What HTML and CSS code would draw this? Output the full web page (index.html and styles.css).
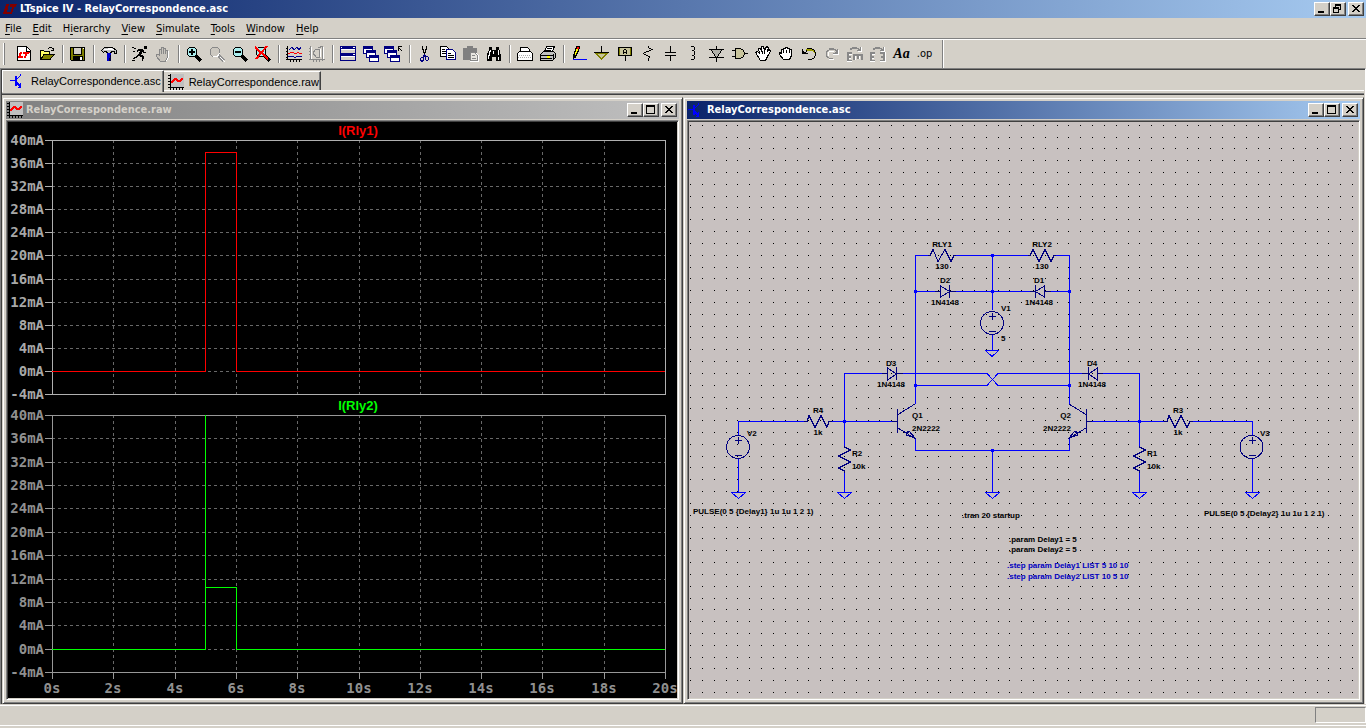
FILE: index.html
```
<!DOCTYPE html>
<html lang="en">
<head>
<meta charset="utf-8">
<title>LTspice IV - RelayCorrespondence.asc</title>
<link rel="stylesheet" href="styles.css">
</head>
<body>
<svg class="defs" width="0" height="0" aria-hidden="true">
  <symbol id="min" viewBox="0 0 12 10"><path d="M2 7h6v2H2z"/></symbol>
  <symbol id="max" viewBox="0 0 12 10"><path fill-rule="evenodd" d="M1 0h9v9H1zM2 2v6h7V2z"/></symbol>
  <symbol id="restore" viewBox="0 0 12 10"><path fill-rule="evenodd" d="M3 0h6v6H7V5h1V2H4v1H3zM1 3h6v6H1zM2 5v3h4V5z"/></symbol>
  <symbol id="close" viewBox="0 0 12 10"><path d="M2 1h2v1h1v1h2V2h1V1h2v1H9v1H8v1H7v1h1v1h1v1h1v1H8V7H7V6H5v1H4v1H2V7h1V6h1V5h1V4H4V3H3V2H2z"/></symbol>
  <symbol id="wave" viewBox="0 0 16 16"><path fill="#c0c0c0" d="M2 0h14v13H2z"/><path d="M2 0h1v13h13v1h-1v2h-1v-2h-2v2h-1v-2H9v2H8v-2H6v2H5v-2H3v2H2v-2H0v-1h2v-2H0v-1h2V8H0V7h2V5H0V4h2V2H0V1h2z"/><path fill="#f00" d="M3 7h1V6h1V5h1V4h3v1h1v1h2V5h1V4h2v2h-1v1h-1v1H9V7H8V6H7v1H6v1H5v1H3z"/></symbol>
  <symbol id="npn" viewBox="0 0 16 16"><path fill="#00f" d="M0 7h5V3h2v2h1V4h1V3h1V1h1v2h-1v1H9v1H8v1H7v3h1v1h1v1h1v-1h1v5H8v-1h1v-1H8v-1H7v1H5V8H0z"/></symbol>
  <symbol id="lens" viewBox="0 0 16 16"><path d="M9 9l6 6" stroke="currentColor" stroke-width="3"/><circle cx="6" cy="6" r="5" fill="#aee" stroke="currentColor"/></symbol>
  <symbol id="cascade" viewBox="0 0 16 16"><g fill="#fff" stroke="#000080"><path d="M.5.500h9v7h-9z"/><path d="M3.500 4.500h9v7h-9z"/><path d="M6.500 9.500h9v6h-9z"/></g><path fill="#000080" d="M0 0h10v3H0zM3 4h10v3H3zM6 9h10v3H6z"/></symbol>
</svg>

<header class="titlebar">
  <svg class="logo" viewBox="0 0 16 16" aria-hidden="true"><path d="M4 3h3L5 11h4l-1 2H1zM8 3h7l-1 3h-2l-2 7H8l2-7H8z" fill="#800000"/></svg>
  <h1>LTspice IV - RelayCorrespondence.asc</h1>
  <div class="caption-buttons">
    <button type="button" aria-label="Minimize"><svg><use href="#min"/></svg></button>
    <button type="button" aria-label="Restore"><svg><use href="#restore"/></svg></button>
    <button type="button" class="close" aria-label="Close"><svg><use href="#close"/></svg></button>
  </div>
</header>

<nav class="menu" aria-label="Menu">
  <button type="button"><u>F</u>ile</button>
  <button type="button"><u>E</u>dit</button>
  <button type="button">H<u>i</u>erarchy</button>
  <button type="button"><u>V</u>iew</button>
  <button type="button"><u>S</u>imulate</button>
  <button type="button"><u>T</u>ools</button>
  <button type="button"><u>W</u>indow</button>
  <button type="button"><u>H</u>elp</button>
</nav>

<div class="toolbar" role="toolbar" aria-label="Tools">
  <span class="grip"></span>
  <button type="button" aria-label="New schematic"><svg viewBox="0 0 16 16"><path d="M1.500.500h9l4 4v10h-13z" fill="#fff" stroke="#000"/><path d="M10.500 1v4H14" fill="none" stroke="#000"/><path d="M4 6h2l-1 4h2v2H2zM7 6h7l-1 2h-2l-1 4H8l1-4H7z" fill="#f00"/></svg></button>
  <button type="button" aria-label="Open"><svg viewBox="0 0 16 16"><path d="M9 2.500h1M10 1.500h3M13 2.500h1M14.500 2v3M12 4.500h3" stroke="#000"/><path d="M1.500 13.500v-9h3l1 1h5v3h4l-4 5z" fill="#ff6" stroke="#000"/><path d="M2 13l3-4.500h10l-4 5H2z" fill="#808000" stroke="#000"/></svg></button>
  <span class="sep"></span>
  <button type="button" aria-label="Save"><svg viewBox="0 0 16 16"><path d="M0 1h15v14H1l-1-1z" fill="#000"/><path d="M1 2h2v7h9V2h2v12H1z" fill="#808000"/><path d="M4 2h7v6H4zM10 11h2v3h-2z" fill="#d4d0c8"/><path d="M3 10h10v5H3z"/><path d="M10 11h2v3h-2zM13 2h1v1h-1z" fill="#fff"/></svg></button>
  <span class="sep"></span>
  <button type="button" aria-label="Control panel"><svg viewBox="0 0 16 16"><path d="M.5 4.500l3-3h8l4 3v3h-2v-2h-3l-1 2h-3l-1-2h-2l-1 1z" fill="#c0c0c0" stroke="#000"/><path d="M3 3h4V2h4v1h2v1H3z" fill="#fff"/><path d="M6 7h4v2H9v6H6z" fill="#0000d0"/><path d="M9 9h1v6H8z" fill="#000040"/></svg></button>
  <span class="sep"></span>
  <button type="button" aria-label="Run"><svg viewBox="0 0 16 16"><path d="M12 0h3v3h-3zM6 3h5v1h1v2h2v1h-3V6h-1v2H9v1h2v1h1v3h-1v2h-1v-4H8v-1H6v1H5v1H3v1H1v-1h1v-1h2v-1h1V9h1V8h1V6h1V5H6v1H5V4h1z"/><path d="M0 1.500h2M2 2.500h2M1 5.500h2M0 14.500h3" stroke="#000"/></svg></button>
  <button type="button" aria-label="Halt" disabled><svg viewBox="0 0 16 16"><path d="M4.500 9V3.500h2V8 1.500h2V8 2.500h2V8 4.500h2V11l-2 4.500h-5l-4-5v-2h1z" fill="#c8c4bc" stroke="#888"/><path d="M13.500 5v6l-2 4" fill="none" stroke="#fff"/></svg></button>
  <span class="sep"></span>
  <button type="button" aria-label="Zoom in"><svg viewBox="0 0 16 16"><use href="#lens"/><path d="M3 6h6M6 3v6" stroke="#000" stroke-width="2"/></svg></button>
  <button type="button" aria-label="Zoom area" disabled><svg viewBox="0 0 16 16"><path d="M9 9l6 6" stroke="#909090" stroke-width="3"/><circle cx="6" cy="6" r="5" fill="#ccc8c0" stroke="#888"/><path d="M11 11l5 5M4 10l4 1 3-4" fill="none" stroke="#fff"/></svg></button>
  <button type="button" aria-label="Zoom out"><svg viewBox="0 0 16 16"><use href="#lens"/><path d="M3 6h6" stroke="#000" stroke-width="2"/></svg></button>
  <button type="button" aria-label="Zoom full extents"><svg viewBox="0 0 16 16"><use href="#lens"/><path d="M0 1l13 12M12 0L1 13" stroke="#f00" stroke-width="2"/></svg></button>
  <span class="sep"></span>
  <button type="button" aria-label="Autorange"><svg viewBox="0 0 16 16"><path d="M1.500 0v14M0 13.500h16M0 2.500h2M0 5.500h2M0 8.500h2M0 11.500h2M4.500 14v2M7.500 14v2M10.500 14v2M13.500 14v2" stroke="#000"/><path d="M3 4l3-3 2 3 3-3 2 3 2-3M2 10h4l2 1h2l2-1h4" fill="none" stroke="#000090"/><path d="M2 7.500h2M4 6.500h4M8 7.500h3M11 6.500h2M13 7.500h3" stroke="#f00"/></svg></button>
  <button type="button" aria-label="Plot settings" disabled><svg viewBox="0 0 16 16"><path d="M1.500 0v14M0 13.500h16M0 2.500h2M0 5.500h2M0 8.500h2M4.500 14v2M7.500 14v2M10.500 14v2M13.500 0v15M9 2l5-2M4 7l3-4h3v8H7L4 7" fill="none" stroke="#888"/><path d="M2.500 1v12M14.500 1v12M11 3v8" stroke="#fff"/></svg></button>
  <span class="sep"></span>
  <button type="button" aria-label="Tile windows"><svg viewBox="0 0 16 16"><path d="M0 0h16v15H0z" fill="#000080"/><path d="M1 4h14v3H1zM1 11h14v3H1z" fill="#d4d0c8"/><path d="M1 3.500h14M1 10.500h14M1 1.500h1M13 1.500h2M13 8.500h2" stroke="#fff"/></svg></button>
  <button type="button" aria-label="Cascade windows"><svg viewBox="0 0 16 16"><use href="#cascade"/></svg></button>
  <button type="button" aria-label="Close windows"><svg viewBox="0 0 16 16"><use href="#cascade" x="-2"/><path d="M11 0h5v1h-3v1h1v1h1v1h1v1h-1V4h-1V3h-1v2h-1V0z"/></svg></button>
  <span class="sep"></span>
  <button type="button" aria-label="Cut"><svg viewBox="0 0 16 16"><path d="M5 0h1v3h1v3h1V3h1V0h1v4H9v3H8v3H7V7H6V4H5z"/><path fill="#000080" fill-rule="evenodd" d="M7 8h1v1h1v1h2v1h1v3h-1v1H9v-1H8v-3H7v4H6v1H4v-1H3v-3h1v-1h2V9h1zM4 12v2h2v-2zM9 11v3h2v-3z"/></svg></button>
  <button type="button" aria-label="Copy"><svg viewBox="0 0 16 16"><path d="M.5.500h6l2 2v8h-8z" fill="#fff" stroke="#000"/><path d="M6.500 3.500h6l3 3v7h-9z" fill="#fff" stroke="#000080"/><path d="M2 3.500h3M2 5.500h4M2 7.500h4M8 7.500h3M8 9.500h6M8 11.500h6" stroke="#000"/></svg></button>
  <button type="button" aria-label="Paste" disabled><svg viewBox="0 0 16 16"><path d="M0 2h4V0h6v2h4v12H0z" fill="#808080"/><path d="M7 7h6l3 3v6H7z" fill="#fff"/><path d="M7.500 6.500h4l3 3v5h-7zM9 9.500h3M9 12.500h4" fill="#e8e6e0" stroke="#888"/></svg></button>
  <button type="button" aria-label="Find"><svg viewBox="0 0 16 16"><path d="M3 1h3v3h4V1h3v3l1 1 1 5v5h-5v-4H6v4H1v-5l1-5 1-1z"/><path d="M4 4v1H3v4H2v4M12 4v5M7 5v3M12 11v3" fill="none" stroke="#fff"/></svg></button>
  <span class="sep"></span>
  <button type="button" aria-label="Print setup"><svg viewBox="0 0 16 16"><path d="M3.500 6V1.500h7l2 2V6" fill="#fff" stroke="#000"/><path d="M.5 7.500l2-2h11l2 2v7H.5z" fill="#fff" stroke="#000"/><path d="M1 11.500h14M2 9.500h12" stroke="#aaa" stroke-dasharray="1 1"/></svg></button>
  <button type="button" aria-label="Print"><svg viewBox="0 0 16 16"><path d="M4.500 6l2-5.500h8L12 6" fill="#fff" stroke="#000"/><path d="M.5 8.500l3-3h10l2 2v4l-3 3H.5z" fill="#c0c0c0" stroke="#000"/><path d="M7 2.500h5M6 4.500h5M1 9.500h12M1 12.500h11M13.500 8v6" stroke="#000"/><path d="M7 10.500h3" stroke="#ff0" stroke-width="2"/></svg></button>
  <span class="sep"></span>
  <button type="button" aria-label="Wire"><svg viewBox="0 0 16 16"><path d="M5 0h4v3H8v3H7v2H6v2H5v2H3v1H2V8h1V5h1V2h1z"/><path fill="#ff0" d="M5 3h2v2H6v2H5v2H4V6h1z"/><path fill="#f00" d="M6 1h2v2H6z"/><path d="M2 13.500h14" stroke="#00f"/></svg></button>
  <button type="button" aria-label="Ground"><svg viewBox="0 0 16 16"><path fill="#808000" d="M1 7h13v1h-1v1h-1v1h-1v1h-1v1H9v1H8v1H7v-1H6v-1H5v-1H4v-1H3V9H2V8H1z"/><path fill="#c8c49c" d="M4 8h7v1h-1v1H9v1H8v1H7v-1H6v-1H5V9H4z"/><path d="M7 0h1v6h7v1H0V6h7z"/></svg></button>
  <button type="button" aria-label="Label net"><svg viewBox="0 0 16 16"><path d="M1.500 1.500h13v8h-13z" fill="#c8c49c" stroke="#000"/><path d="M2.500 2v7M13.500 2v7" stroke="#808000"/><path d="M8.500 10v5M6.500 8V4M9.500 8V4M7 3.500h2M6 6.500h4" stroke="#000" fill="none"/></svg></button>
  <button type="button" aria-label="Resistor"><svg viewBox="0 0 16 16"><path d="M8 0h1v2H8zM9 2h2v1H9zM11 3h2v1h-2zM9 4h2v1H9zM6 5h3v1H6zM4 6h2v1H4zM3 7h1v1H3zM4 8h2v1H4zM6 9h2v1H6zM8 10h2v1H8zM9 11h1v1H9zM8 12h1v3H8z"/></svg></button>
  <button type="button" aria-label="Capacitor"><svg viewBox="0 0 16 16"><path d="M2 6.500h11M2 9.500h11M7.500 0v6M7.500 10v5" stroke="#000"/></svg></button>
  <button type="button" aria-label="Inductor"><svg viewBox="0 0 16 16"><path d="M5 0h3v1H5zM8 1h1v3H8zM6 4h2v1H6zM8 5h1v4H8zM6 9h2v1H6zM8 10h1v3H8zM5 13h3v1H5z"/></svg></button>
  <button type="button" aria-label="Diode"><svg viewBox="0 0 16 16"><path fill="#b0b0a8" d="M3 4h9v1h-1v2h-1v1H9v2H8v1H7v-1H6V8H5V7H4V5H3z"/><path d="M7 0h1v3h7v1h-2v1h-1v2h-1v1h-1v2H9v1h6v1H8v4H7v-4H0v-1h6v-1H5V8H4V7H3V5H2V4H0V3h7zM3 4v1h1v2h1v1h1v2h1v1h1v-1h1V8h1V7h1V5h1V4z"/></svg></button>
  <button type="button" aria-label="Component"><svg viewBox="0 0 16 16"><path d="M3.500 2.500h5l3 2 1 3-1 3-3 2h-5z" fill="#c8c49c" stroke="#000"/><path d="M0 4.500h3M0 10.500h3M13 7.500h3" stroke="#000"/></svg></button>
  <button type="button" aria-label="Move"><svg viewBox="0 0 16 16"><path d="M.5 6.500l2-1 2 2-1-5h2l1 3V.5h2l1 4 2-4 2 1-1 4 2-2 1 2-3 5-2 4h-5z" fill="#fff" stroke="#000"/><path d="M7.500 5v3M9.500 5v3" stroke="#000"/></svg></button>
  <button type="button" aria-label="Drag"><svg viewBox="0 0 16 16"><path d="M1.500 6.500l2 1v-4h2v-1h2v-1h2v1h2v1h2v6l-2 4h-6l-4-5z" fill="#fff" stroke="#000"/><path d="M5.500 4v3M8.500 4v3M11.500 4v3" stroke="#000"/></svg></button>
  <button type="button" aria-label="Undo"><svg viewBox="0 0 16 16"><path fill="#a0a000" d="M5 3h7v1h1v1h1v2h-1V6h-1V5H5z"/><path d="M6 2h5v1H6zM11 3h2v1h-2zM13 4h1v2h-1zM14 6h1v4h-1zM13 10h1v2h-1zM11 12h2v1h-2zM7 13h4v1H7zM1 3h1v2h1v1h2V4h1v2H5v1h2v1H1z"/></svg></button>
  <button type="button" aria-label="Redo" disabled><svg viewBox="0 0 16 16"><path fill="#888" d="M5 2h5v1h2v1h1V3h1v5H9V7h2V6h1V5h-1V4H5v1H4v1H3v4h1v1h1v1h4v1H5v-1H3v-1H2V5h1V4h2z"/><path fill="#fff" d="M14 4h1v5H9V8h5zM5 13h5v1H5zM4 6h1V5h5v1H5v4H4z"/></svg></button>
  <button type="button" aria-label="Rotate" disabled><svg viewBox="0 0 16 16"><path fill="#888" d="M3 2h2V1h5v1h2v1h1V1h1v4h-4V4h1V3H5v1H3zM0 6h5v2H2v2h2v2H2v2h3v1H0zM6 8h10v6h-2v-4h-2v3h-2v-3H8v4H6z"/><path fill="#fff" d="M2 8h3v1H2zM2 12h2v1H2zM0 15h5v1H0zM8 10h1v4H8zM12 10h1v3h-1zM14 1h1v5h-4V5h3z"/></svg></button>
  <button type="button" aria-label="Mirror" disabled><svg viewBox="0 0 16 16"><path fill="#888" d="M3 2h2V1h5v1h2v1h1V1h1v4h-4V4h1V3H5v1H3zM0 6h5v2H2v2h2v2H2v2h3v1H0zM10 6h5v9h-5v-1h3v-2h-2v-2h2V8h-3z"/><path fill="#fff" d="M2 8h3v1H2zM2 12h2v1H2zM0 15h5v1H0zM15 6h1v10h-6v-1h5zM14 1h1v5h-4V5h3z"/></svg></button>
  <button type="button" class="text-tool" aria-label="Text">Aa</button>
  <button type="button" class="text-tool op" aria-label="SPICE directive">.op</button>
  <span class="toolbar-end"></span>
</div>

<main class="workspace">
  <div class="tabs" role="tablist">
    <button type="button" class="tab selected" role="tab" aria-selected="true"><svg><use href="#npn"/></svg>RelayCorrespondence.asc</button>
    <button type="button" class="tab" role="tab" aria-selected="false"><svg><use href="#wave"/></svg>RelayCorrespondence.raw</button>
  </div>
  <div class="windows">
    <section class="window inactive">
      <header>
        <svg><use href="#wave"/></svg>
        <h2>RelayCorrespondence.raw</h2>
        <div class="caption-buttons">
          <button type="button" aria-label="Minimize"><svg><use href="#min"/></svg></button>
          <button type="button" aria-label="Maximize"><svg><use href="#max"/></svg></button>
          <button type="button" class="close" aria-label="Close"><svg><use href="#close"/></svg></button>
        </div>
      </header>
      <div class="client plot">
        <svg viewBox="8 122 669 576" role="img" aria-label="Relay currents">
          <g class="lines">
            <path class="grid" d="M52 163.500h613M52 186.500h613M52 209.500h613M52 232.500h613M52 255.500h613M52 279.500h613M52 302.500h613M52 325.500h613M52 348.500h613M52 371.500h613M113.500 140v254M175.500 140v254M236.500 140v254M297.500 140v254M359.500 140v254M420.500 140v254M481.500 140v254M542.500 140v254M604.500 140v254"/>
            <path class="grid" d="M52 438.500h613M52 462.500h613M52 485.500h613M52 508.500h613M52 532.500h613M52 555.500h613M52 579.500h613M52 602.500h613M52 625.500h613M52 649.500h613M113.500 415v257M175.500 415v257M236.500 415v257M297.500 415v257M359.500 415v257M420.500 415v257M481.500 415v257M542.500 415v257M604.500 415v257"/>
            <path class="axis" d="M45 140.500h620.500v254H45M52.500 140v254M45 163.500h7M45 186.500h7M45 209.500h7M45 232.500h7M45 255.500h7M45 279.500h7M45 302.500h7M45 325.500h7M45 348.500h7M45 371.500h7"/>
            <path class="axis dim" d="M45 415.500h620.500V679M45 672.500h620M52.500 415v264M45 438.500h7M45 462.500h7M45 485.500h7M45 508.500h7M45 532.500h7M45 555.500h7M45 579.500h7M45 602.500h7M45 625.500h7M45 649.500h7M113.500 672v7M175.500 672v7M236.500 672v7M297.500 672v7M359.500 672v7M420.500 672v7M481.500 672v7M542.500 672v7M604.500 672v7"/>
            <path class="red" d="M52 371.500h153.500v-219h31v219H665"/>
            <path class="green" d="M52 649.500h153.500V415M205.500 587.500h31v62H665"/>
          </g>
          <g class="trace-name"><text x="358" y="135" fill="#f00">I(Rly1)</text><text x="358" y="410" fill="#0f0">I(Rly2)</text></g>
          <g class="y-labels"><text x="44" y="145">40mA</text><text x="44" y="168">36mA</text><text x="44" y="191">32mA</text><text x="44" y="214">28mA</text><text x="44" y="237">24mA</text><text x="44" y="260">20mA</text><text x="44" y="284">16mA</text><text x="44" y="307">12mA</text><text x="44" y="330">8mA</text><text x="44" y="353">4mA</text><text x="44" y="376">0mA</text><text x="44" y="399">-4mA</text></g>
          <g class="y-labels dim"><text x="44" y="420">40mA</text><text x="44" y="443">36mA</text><text x="44" y="467">32mA</text><text x="44" y="490">28mA</text><text x="44" y="513">24mA</text><text x="44" y="537">20mA</text><text x="44" y="560">16mA</text><text x="44" y="584">12mA</text><text x="44" y="607">8mA</text><text x="44" y="630">4mA</text><text x="44" y="654">0mA</text><text x="44" y="677">-4mA</text></g>
          <g class="x-labels"><text x="52" y="693">0s</text><text x="113" y="693">2s</text><text x="175" y="693">4s</text><text x="236" y="693">6s</text><text x="297" y="693">8s</text><text x="359" y="693">10s</text><text x="420" y="693">12s</text><text x="481" y="693">14s</text><text x="542" y="693">16s</text><text x="604" y="693">18s</text><text x="665" y="693">20s</text></g>
        </svg>
      </div>
    </section>

    <section class="window">
      <header>
        <svg><use href="#npn"/></svg>
        <h2>RelayCorrespondence.asc</h2>
        <div class="caption-buttons">
          <button type="button" aria-label="Minimize"><svg><use href="#min"/></svg></button>
          <button type="button" aria-label="Maximize"><svg><use href="#max"/></svg></button>
          <button type="button" class="close" aria-label="Close"><svg><use href="#close"/></svg></button>
        </div>
      </header>
      <div class="client schematic">
        <svg viewBox="689 122 669 576" role="img" aria-label="Relay driver schematic">
          <path id="dots" fill="#000"/>
          <path class="wire" d="M929 255.500H915.500V404M955 255.500H1029M1055 255.500H1069.500V404M992.500 255V310M915 291.500H935M955 291.500H1030M1049 291.500H1069M992.500 335V350M844.500 421V373.500H882M902 373.500H987L998 385.500H1069M915 385.500H987L998 373.500H1083M1103 373.500H1139.500V447M738.500 435V421.500H804M832 421.500H892M844.500 421V447M844.500 472V492M738.500 459V492M915.500 438V450.500H1069.500V438M992.500 450V492M1092 421.500H1164M1193 421.500H1252.500V435M1252.500 459V492M1139.500 472V492"/>
          <path class="wire" d="M985.500 350.500h13l-6.500 6zM731.500 492.500h14l-7 6zM837.500 492.500h14l-7 6zM985.500 492.500h14l-7 6zM1132.500 492.500h14l-7 6zM1245.500 492.500h14l-7 6z"/>
          <path class="node" d="M914 290h3v3h-3zM1068 290h3v3h-3zM991 254h3v3h-3zM991 290h3v3h-3zM914 384h3v3h-3zM1068 384h3v3h-3zM843 420h3v3h-3zM1138 420h3v3h-3zM991 449h3v3h-3z"/>
          <g class="part">
            <path d="M928 255.500h2l3-6 5 12 7-12 6 12 3-6h2M1028 255.500h2l3-6 6 12 6-12 6 12 3-6h2M804 421.500h3l2-6 6 12 6-12 6 12 2-6h3M1164 421.500h3l2-6 6 12 6-12 6 12 3-6h3"/>
            <path d="M844.500 446v1l6 3-12 6 12 6-12 6 6 3v2M1139.500 446v1l6 3-12 6 12 6-12 6 6 3v2"/>
            <path d="M935 291.500h5M940.500 286v11l9-5.500zM949.500 285v13M949 291.500h7M1030 291.500h5M1044.500 286v11l-9-5.500zM1035.500 285v13M1044 291.500h7M882 373.500h5M887.500 368v12l9-6zM896.500 367v13M896 373.500h7M1082 373.500h6M1097.500 368v12l-9-6zM1088.500 367v13M1097 373.500h6"/>
            <circle cx="992" cy="323" r="11.500"/><circle cx="738" cy="447" r="11.500"/><circle cx="1251.500" cy="447" r="11.500"/>
            <path d="M989 316.500h7M992.500 313v7M989 331.500h7M735 440.500h7M738.500 437v7M735 455.500h7M1249 440.500h7M1252.500 437v7M1249 455.500h7"/>
            <path d="M892 421.500h5M897.500 409v24M898 414.500l17-10.500M898 428l17 10.500M906 433l3-2 6 7-9-3 3-3M1092 421.500h-5M1086.500 409v24M1086 414.500l-17-10.500M1086 428l-17 10.500M1078 433l-3-2-6 7 9-3-3-3"/>
          </g>
          <g class="label mid">
            <text x="942" y="247">RLY1</text><text x="942" y="269">130</text><text x="1042" y="247">RLY2</text><text x="1042" y="269">130</text>
            <text x="945" y="283">D2</text><text x="945" y="305">1N4148</text><text x="1039" y="283">D1</text><text x="1039" y="305">1N4148</text>
            <text x="891" y="366">D3</text><text x="891" y="387">1N4148</text><text x="1092" y="366">D4</text><text x="1092" y="387">1N4148</text>
            <text x="818" y="413">R4</text><text x="818" y="435">1k</text><text x="1178" y="413">R3</text><text x="1178" y="435">1k</text>
          </g>
          <g class="label">
            <text x="1001" y="311">V1</text><text x="1001" y="341">5</text><text x="747" y="436">V2</text><text x="1260" y="436">V3</text>
            <text x="912" y="418">Q1</text><text x="912" y="431">2N2222</text>
            <text x="852" y="456">R2</text><text x="852" y="469">10k</text><text x="1147" y="456">R1</text><text x="1147" y="469">10k</text>
            <text x="693" y="514">PULSE(0 5 {Delay1} 1u 1u 1 2 1)</text><text x="1204" y="516">PULSE(0 5 {Delay2} 1u 1u 1 2 1)</text>
            <text x="962" y="518">.tran 20 startup</text>
            <text x="1009" y="542">.param Delay1 = 5</text><text x="1009" y="552">.param Delay2 = 5</text>
            <text class="comment" x="1007" y="568">.step param Delay1 LIST 5 10 10</text><text class="comment" x="1007" y="579">.step param Delay2 LIST 10 5 10</text>
          </g>
          <g class="label end"><text x="1071" y="418">Q2</text><text x="1071" y="431">2N2222</text></g>
        </svg>
      </div>
    </section>
  </div>
</main>

<footer class="status"><span class="pane"></span></footer>
<script src="grid.js"></script>
</body>
</html>
```
FILE: styles.css
```
:root {
  --face: #d4d0c8;
  --shadow: #808080;
  --dark: #404040;
  --ui: "DejaVu Sans Condensed", "Noto Sans", sans-serif;
}
* { box-sizing: border-box; }
body {
  margin: 0;
  height: 100vh;
  display: flex;
  flex-direction: column;
  background: var(--face);
  font: 11px/14px var(--ui);
  color: #000;
  overflow: hidden;
}
button { font: inherit; color: inherit; background: none; border: 0; margin: 0; padding: 0; }
svg { display: block; shape-rendering: crispEdges; }
.defs { position: absolute; }

.titlebar, .window header {
  display: flex;
  align-items: center;
  height: 18px;
  flex: none;
  padding: 0 2px;
  color: #fff;
  background: linear-gradient(90deg, #0a246a, #a6caf0);
}
.logo { width: 16px; height: 16px; }
h1, h2 { margin: 0; flex: 1; font: bold 11px/16px "DejaVu Sans Condensed", "Noto Sans", sans-serif; }
h1 { padding-left: 2px; }
.caption-buttons { display: flex; }
.caption-buttons button {
  width: 16px;
  height: 14px;
  padding: 1px;
  color: #000;
  background: var(--face);
  border: 1px solid;
  border-color: #fff var(--dark) var(--dark) #fff;
  box-shadow: inset -1px -1px 0 var(--shadow);
}
.caption-buttons svg { width: 12px; height: 10px; }
.caption-buttons .close { margin-left: 2px; }

.menu {
  display: flex;
  gap: 11px;
  height: 22px;
  flex: none;
  padding: 4px 5px 0;
  align-items: flex-start;
  border-bottom: 1px solid #fff;
  box-shadow: inset 0 -1px 0 var(--shadow);
}
.menu u { text-underline-offset: 2px; }

.toolbar { display: flex; align-items: center; height: 28px; flex: none; padding-left: 3px; }
.toolbar button { width: 23px; height: 22px; padding-left: 3px; flex: none; }
.toolbar svg { width: 16px; height: 16px; overflow: visible; }
.grip { width: 2px; height: 22px; margin-right: 8px; background: #fff; border-right: 1px solid var(--shadow); }
.sep { width: 8px; height: 18px; flex: none; border-left: 3px solid var(--face); background: linear-gradient(90deg, var(--shadow) 1px, #fff 1px 2px, var(--face) 2px); }
.toolbar .text-tool { font: italic bold 14px/16px "Liberation Serif", serif; padding: 0; text-align: center; }
.toolbar .op { font: 11px/16px "DejaVu Sans Condensed", sans-serif; }
.toolbar-end { align-self: stretch; width: 2px; margin-left: 6px; background: #fff; border-left: 1px solid var(--shadow); }

.workspace {
  flex: 1;
  min-height: 0;
  display: flex;
  flex-direction: column;
  border-top: 1px solid var(--shadow);
  border-left: 1px solid var(--shadow);
  border-right: 1px solid #fff;
  box-shadow: inset 1px 1px 0 var(--dark);
  padding: 1px 1px 0 1px;
}
.tabs {
  display: flex;
  align-items: flex-end;
  height: 25px;
  flex: none;
  margin-bottom: 2px;
  padding-bottom: 3px;
  border-bottom: 1px solid var(--dark);
  box-shadow: inset 0 -1px 0 var(--shadow), inset 0 -3px 0 var(--face), inset 0 -4px 0 #fff;
}
.tab {
  display: flex;
  align-items: center;
  gap: 5px;
  height: 19px;
  padding: 2px 1px 0 4px;
  font: 11px/16px "Liberation Sans", sans-serif;
  border-top: 1px solid #fff;
  border-right: 1px solid var(--dark);
  box-shadow: inset -1px 0 0 var(--shadow);
  margin-bottom: 1px;
}
.tab svg { width: 16px; height: 16px; }
.tab.selected { height: 22px; padding: 0 2px 2px 7px; margin-bottom: -1px; border-left: 1px solid #fff; background: var(--face); }

.windows { flex: 1; min-height: 0; display: grid; grid-template-columns: 1fr 1fr; }
.window {
  display: flex;
  flex-direction: column;
  min-width: 0;
  min-height: 0;
  padding: 3px;
  border: 1px solid;
  border-color: var(--face) var(--dark) var(--dark) var(--face);
  box-shadow: inset 1px 1px 0 #fff, inset -1px -1px 0 var(--shadow);
}
.window header svg { flex: none; }
.window header > svg { width: 16px; height: 16px; margin-right: 2px; }
.window header { padding-left: 1px; }
.window header > svg + h2 { padding-left: 1px; }
.inactive header { background: linear-gradient(90deg, #808080, #c0c0c0); color: var(--face); }
.client {
  flex: 1;
  min-height: 0;
  margin-top: 1px;
  border: 1px solid;
  border-color: var(--shadow) #fff #fff var(--shadow);
  padding: 1px;
  box-shadow: inset 1px 1px 0 var(--dark), inset -1px -1px 0 var(--face);
}
.client > svg { width: 100%; height: 100%; }
.plot > svg { background: #000; }
.schematic > svg { background: #c8c1c0; }

.lines path, .wire, .part { fill: none; stroke-width: 1px; }
.grid { stroke: #686868; stroke-dasharray: 3 3; }
.axis { stroke: #b0b0b0; }
.axis.dim { stroke: #989898; }
.red { stroke: #f00; }
.green { stroke: #0f0; }
.trace-name { font: bold 13px "Liberation Sans", sans-serif; text-anchor: middle; }
.y-labels, .x-labels { font: bold 14px "DejaVu Sans Mono", monospace; fill: #a8a8a8; }
.y-labels { text-anchor: end; }
.x-labels { text-anchor: middle; }
.x-labels, .y-labels.dim { fill: #909090; }

.wire { stroke: #00f; }
.node { fill: #00f; }
.part { stroke: #000080; }
.label { font: bold 8px "Liberation Sans", sans-serif; fill: #000; }
.mid { text-anchor: middle; }
.end { text-anchor: end; }
.comment { fill: #0000c0; }

.status {
  height: 24px;
  flex: none;
  display: flex;
  justify-content: flex-end;
  padding: 3px 0 0;
  border-bottom: 2px solid var(--face);
  box-shadow: inset 0 1px 0 var(--face), inset 0 2px 0 #fff, inset 0 -1px 0 #fff;
}
.pane { width: 51px; height: 16px; border: 1px solid; border-color: var(--shadow) #fff #fff var(--shadow); }
```
FILE: grid.js
```
// Snap points of the schematic sheet, one pixel each.
const step = 11.82;
let d = "";
for (let j = 0; j < 49; j++) {
  for (let i = 0; i < 57; i++) {
    d += `M${Math.floor(690.7 + i * step)} ${Math.floor(125.2 + j * step)}h1v1h-1z`;
  }
}
document.getElementById("dots").setAttribute("d", d);
```
